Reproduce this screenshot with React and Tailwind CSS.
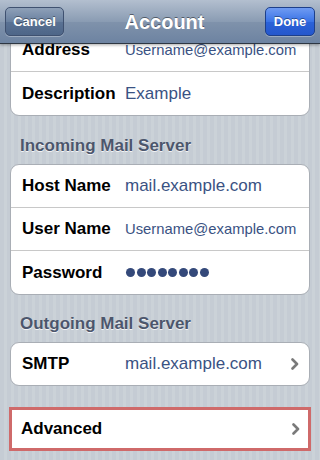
import React from 'react';

const font = { fontFamily: '"Liberation Sans", Arial, sans-serif' };

const Chevron = () => (
  <svg className="w-[8px] h-[12px]" viewBox="0 0 8 12">
    <path d="M1.5 1.5 L6 6 L1.5 10.5" fill="none" stroke="#7a7a7a" strokeWidth="2.6" strokeLinecap="round" strokeLinejoin="round" />
  </svg>
);

const Row = ({ label, value, small, dots, chevron, last, h = 'h-[43px]' }) => (
  <div className={`${h} flex items-center pl-[11px] pr-[10px] ${last ? '' : 'border-b border-[#c8c8c8]'}`}>
    <div className="w-[104px] shrink-0 text-[17px] font-bold text-black">{label}</div>
    <div className="flex-1 min-w-0">
      {dots ? (
        <div className="flex gap-[1.5px]">
          {Array.from({ length: 8 }).map((_, i) => (
            <span key={i} className="w-[9px] h-[9px] rounded-full bg-[#34497a]" />
          ))}
        </div>
      ) : (
        <span className={`${small ? 'text-[14.8px]' : 'text-[17px]'} text-[#3a5283] whitespace-nowrap -ml-[1px]`}>{value}</span>
      )}
    </div>
    {chevron && <Chevron />}
  </div>
);

const Header = ({ children, h }) => (
  <div className={`${h} flex items-end pb-2 px-[10px]`}>
    <span className="text-[17px] leading-[21px] font-bold text-[#4c566c] [text-shadow:0_1px_0_rgba(255,255,255,0.8)]">
      {children}
    </span>
  </div>
);

export default function App() {
  return (
    <div
      style={font}
      className="w-[320px] h-[460px] overflow-hidden bg-[repeating-linear-gradient(90deg,#c5ccd4_0px,#c5ccd4_4px,#cbd2d8_4px,#cbd2d8_7px)]"
    >
      {/* nav bar */}
      <div className="relative z-10 h-11 flex items-center justify-between px-[5px] bg-[linear-gradient(180deg,#b3bfcf_0%,#8a9cb3_50%,#7f92ab_52%,#6d83a1_100%)] border-b border-[#2d3642] shadow-[0_1px_3px_rgba(0,0,0,0.35)]">
        <button className="w-[59px] h-[29px] rounded-[5px] border border-[#3f5170] bg-[linear-gradient(180deg,#8ea0b8_0%,#6a81a0_50%,#5a7294_52%,#4e6688_100%)] text-white text-[13px] font-bold [text-shadow:0_-1px_0_rgba(0,0,0,0.4)] shadow-[0_1px_0_rgba(255,255,255,0.3)]">
          Cancel
        </button>
        <div className="text-white text-[20px] font-bold [text-shadow:0_-1px_0_rgba(0,0,0,0.45)]">Account</div>
        <button className="w-[50px] h-[29px] rounded-[5px] border border-[#1d3f8a] bg-[linear-gradient(180deg,#6f9bf2_0%,#3a73e6_50%,#2b62d9_52%,#2457cc_100%)] text-white text-[13px] font-bold [text-shadow:0_-1px_0_rgba(0,0,0,0.4)] shadow-[0_1px_0_rgba(255,255,255,0.3)]">
          Done
        </button>
      </div>

      <div className="-mt-[16px] px-[10px]">
        <div className="bg-white rounded-[9px] border border-[#a9aeb5] overflow-hidden">
          <Row label="Address" value="Username@example.com" small />
          <Row label="Description" value="Example" last />
        </div>

        <Header h="h-12">Incoming Mail Server</Header>
        <div className="bg-white rounded-[9px] border border-[#a9aeb5] overflow-hidden">
          <Row label="Host Name" value="mail.example.com" />
          <Row label="User Name" value="Username@example.com" small />
          <Row label="Password" dots last />
        </div>

        <Header h="h-[47px]">Outgoing Mail Server</Header>
        <div className="bg-white rounded-[9px] border border-[#a9aeb5] overflow-hidden">
          <Row label="SMTP" value="mail.example.com" chevron last h="h-[42px]" />
        </div>

        <div className="mt-[21px] -mx-[1px] border-[3px] border-[#cf6a6a] bg-white">
          <div className="-ml-[2px] -mr-[2px]">
            <Row label="Advanced" chevron last h="h-[38px]" />
          </div>
        </div>
      </div>
    </div>
  );
}
